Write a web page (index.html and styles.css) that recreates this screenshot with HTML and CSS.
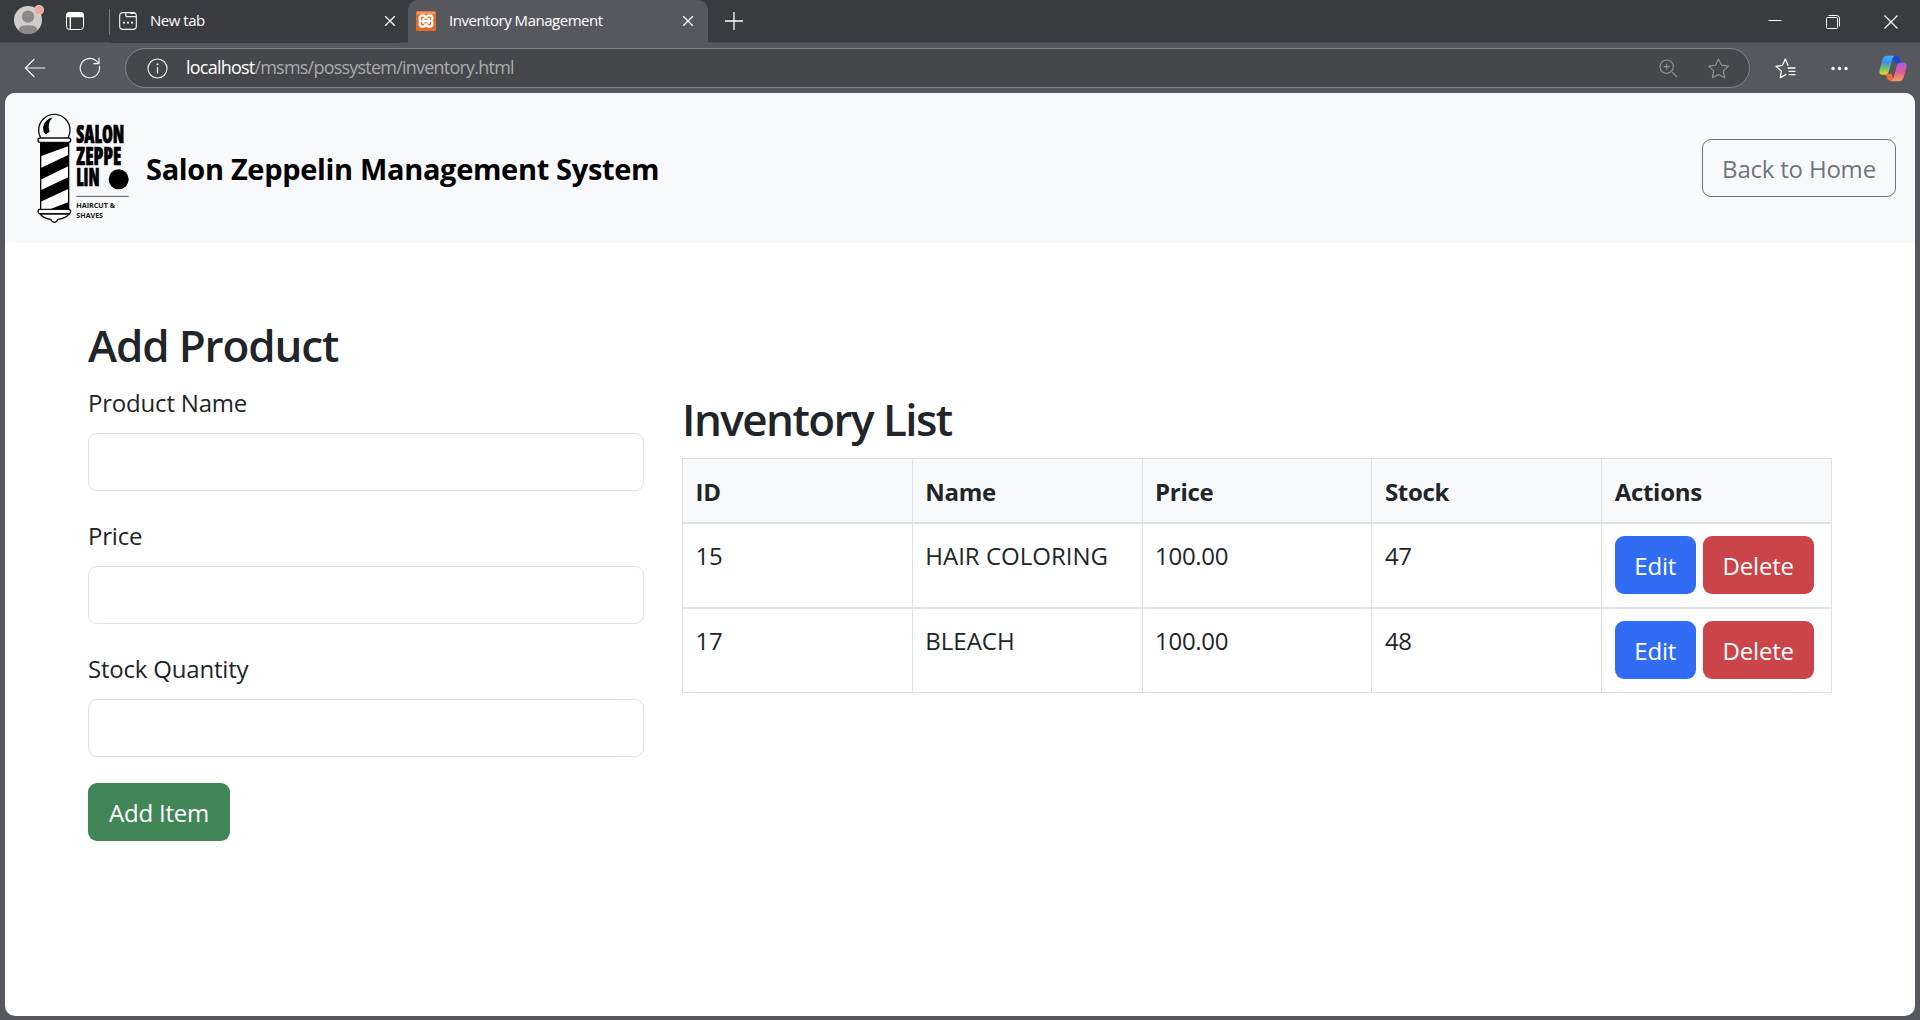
FILE: index.html
```html
<!DOCTYPE html>
<html lang="en">
<head>
<meta charset="utf-8">
<title>Inventory Management</title>
<link rel="stylesheet" href="styles.css">
</head>
<body>
<div class="browser">
  <div class="tabstrip">
    <div class="strip-tools">
      <svg class="avatar" width="32" height="32" viewBox="0 0 96 96">
        <defs><clipPath id="face"><circle cx="45" cy="48" r="42"/></clipPath></defs>
        <circle cx="45" cy="48" r="42" fill="#d0cecb"/>
        <g clip-path="url(#face)" fill="#8b8886"><circle cx="45" cy="38" r="18.500"/><path d="M16 100V80q0-16 29-16t29 16v20z"/></g>
        <circle cx="78" cy="18" r="15" fill="#d9d5d3"/><circle cx="78" cy="18" r="12" fill="#efa49c"/>
      </svg>
      <svg class="workspaces" width="18" height="18" viewBox="0 0 54 54"><rect x="1.500" y="1.500" width="51" height="51" rx="9" fill="none" stroke="#fff" stroke-width="3"/><path d="M1 16V9Q1 1 9 1h36q8 0 8 8v7zM11 14h4v38h-4z" fill="#fff"/></svg>
    </div>
    <div class="tab tab-idle">
      <svg width="18" height="18" viewBox="0 0 54 54" fill="none" stroke="#f0f0f0" stroke-width="3.500"><rect x="2" y="2" width="50" height="50" rx="10"/><path d="M20 2v6q0 6 6 6h26M34 4h14"/><path d="M12 32h6M24 32h6M36 32h6" stroke-width="5"/></svg>
      <span class="tab-label">New tab</span>
      <svg class="tab-close" width="12" height="12" viewBox="0 0 12 12"><path d="M1.200 1.200l9.600 9.600M10.800 1.200l-9.600 9.600" stroke="#fff" stroke-width="1.300"/></svg>
    </div>
    <div class="tab tab-active">
      <svg width="20" height="20" viewBox="0 0 60 60"><rect width="60" height="60" rx="5" fill="#df6c2b"/><path d="M2 2h56v8H2z" fill="#f09a61"/><path d="M12 17Q14 13 20 13Q27 13 28 20H32Q33 13 40 13Q48 13 49 20Q50 27 46 30Q50 33 49 40Q48 47 40 47Q33 47 32 40H28Q27 47 20 47Q12 47 11 40Q10 33 14 30Q10 27 11 20z" fill="none" stroke="#fff" stroke-width="7" stroke-linejoin="round"/><path d="M24 30h12M22 24v12M38 24v12" stroke="#fff" stroke-width="7" stroke-linecap="round"/></svg>
      <span class="tab-label">Inventory Management</span>
      <svg class="tab-close" width="12" height="12" viewBox="0 0 12 12"><path d="M1.200 1.200l9.600 9.600M10.800 1.200l-9.600 9.600" stroke="#fff" stroke-width="1.300"/></svg>
    </div>
    <svg class="new-tab" width="18" height="18" viewBox="0 0 18 18"><path d="M9 0v18M0 9h18" stroke="#fff" stroke-width="1.300"/></svg>
    <div class="window-controls">
      <svg width="14" height="14" viewBox="0 0 14 14"><path d="M.5 5.500h13" stroke="#fff"/></svg>
      <svg width="14" height="14" viewBox="0 0 14 14" fill="none" stroke="#fff"><rect x=".5" y="2.500" width="11" height="11" rx="1"/><path d="M2.500.5h8q3 0 3 3v8"/></svg>
      <svg width="14" height="14" viewBox="0 0 14 14"><path d="M.5.5l13 13M13.500.5l-13 13" stroke="#fff" stroke-width="1.200"/></svg>
    </div>
  </div>

  <div class="toolbar">
    <svg class="back" width="22" height="20" viewBox="0 0 66 60" fill="none" stroke="#f4f4f4" stroke-width="3.500"><path d="M64 30H5M31 3L4 30l27 27"/></svg>
    <svg class="reload" width="22" height="22" viewBox="0 0 66 66" fill="none" stroke="#f4f4f4" stroke-width="3.500"><path d="M61 27A29 29 0 1 1 50 10L60 20M60 2v18H43"/></svg>
    <div class="address">
      <svg width="21" height="21" viewBox="0 0 63 63"><circle cx="31.500" cy="31.500" r="28.500" fill="none" stroke="#ececec" stroke-width="3.500"/><path d="M31.500 27v19" stroke="#ececec" stroke-width="4"/><circle cx="31.500" cy="19" r="3" fill="#ececec"/></svg>
      <span class="url"><span class="host">localhost</span><span class="path">/msms/possystem/inventory.html</span></span>
      <svg class="magnify" width="19" height="19" viewBox="0 0 57 57" fill="none" stroke="#919295" stroke-width="3.500"><circle cx="23" cy="23" r="20"/><path d="M37 37l17 17M23 14v18M14 23h18"/></svg>
      <svg class="star" width="21" height="21" viewBox="0 0 63 63" fill="none" stroke="#919295" stroke-width="3.500" stroke-linejoin="round"><path d="M31.500 3l9 18.500 20.500 3-15 14 4 21-18.500-10-18.500 10 4-21-15-14 20.500-3z"/></svg>
    </div>
    <svg class="favorites" width="21" height="21" viewBox="0 0 63 63" fill="none" stroke="#fff" stroke-width="3.800" stroke-linejoin="round" stroke-linecap="round"><path d="M32 50L16 59l3-20L3 25l19-3 9-19 8 19M39 30h21M42 40h18M42 50h18"/></svg>
    <svg class="dots" width="17" height="5" viewBox="0 0 51 15" fill="#fff"><circle cx="6" cy="7.500" r="5"/><circle cx="25.500" cy="7.500" r="5"/><circle cx="45" cy="7.500" r="5"/></svg>
    <svg class="copilot" width="28" height="27" viewBox="0 0 84 81">
      <defs>
        <linearGradient id="cl" x1="0" y1="0" x2="0" y2="1"><stop offset="0" stop-color="#3fb4f4"/><stop offset=".35" stop-color="#3f8ff0"/><stop offset=".65" stop-color="#6cc16c"/><stop offset="1" stop-color="#f3cf2c"/></linearGradient>
        <linearGradient id="cr" x1="0" y1="0" x2="0" y2="1"><stop offset="0" stop-color="#a35af0"/><stop offset=".5" stop-color="#e9588f"/><stop offset="1" stop-color="#f6a75e"/></linearGradient>
      </defs>
      <path d="M42 2h10q8 0 10 9l4 14H48L38 10z" fill="#2247cf"/>
      <path d="M18 56h20l8 22H36q-9 0-12-9z" fill="#ec6a3a"/>
      <path d="M24 2h24q-6 2-8 11L30 48q-3 11-12 11H11Q-2 59 2 44l9-32Q14 2 24 2z" fill="url(#cl)"/>
      <path d="M60 79H36q6-2 8-10l9-36q3-10 13-10h8q11 0 8 15l-8 29q-4 12-14 12z" fill="url(#cr)"/>
    </svg>
  </div>

  <main class="page">
    <header class="navbar">
      <svg class="logo" width="130" height="135" viewBox="0 0 390 405">
        <circle cx="103" cy="90" r="47" fill="#f8f9fb" stroke="#111" stroke-width="4"/>
        <path d="M98 52Q73 59 69 83q0 13 8 20l12-8Q80 72 98 52z" fill="#000"/>
        <rect x="62" y="126" width="84" height="202" fill="#fff"/>
        <path d="M62 126h84v12L62 169zM62 204l84-40v34l-84 41zM62 271l84-40v35L62 305zM90 328l56-22v22zM62 328v-1h40" fill="#000"/>
        <path d="M62 126v202M146 126v202" stroke="#000" stroke-width="4"/>
        <rect x="54" y="114" width="98" height="13" rx="6" fill="#fff" stroke="#111" stroke-width="4"/>
        <path d="M58 328h90q8 7 0 13H58q-8-6 0-13z" fill="#fff" stroke="#111" stroke-width="4"/>
        <path d="M60 342h88q-13 14-34 16-4 9-11 9t-11-9q-20-2-32-16z" fill="#fff" stroke="#111" stroke-width="4"/>
        <g class="logo-name">
          <text x="169" y="129" textLength="144" lengthAdjust="spacingAndGlyphs">SALON</text>
          <text x="169" y="194" textLength="135" lengthAdjust="spacingAndGlyphs">ZEPPE</text>
          <text x="169" y="259" textLength="70" lengthAdjust="spacingAndGlyphs">LIN</text>
        </g>
        <circle cx="296" cy="238" r="30" fill="#000"/>
        <path d="M169 289h157" stroke="#555" stroke-width="3"/>
        <g class="logo-tag">
          <text x="169" y="325" textLength="116" lengthAdjust="spacingAndGlyphs">HAIRCUT &amp;</text>
          <text x="169" y="354" textLength="80" lengthAdjust="spacingAndGlyphs">SHAVES</text>
        </g>
      </svg>
      <span class="brand">Salon Zeppelin Management System</span>
      <a class="btn btn-outline">Back to Home</a>
    </header>

    <div class="content">
      <form class="product-form">
        <h2>Add Product</h2>
        <div class="field"><label for="name">Product Name</label><input id="name" type="text"></div>
        <div class="field"><label for="price">Price</label><input id="price" type="text"></div>
        <div class="field"><label for="stock">Stock Quantity</label><input id="stock" type="text"></div>
        <button class="btn btn-success" type="button">Add Item</button>
      </form>
      <section class="inventory">
        <h2 class="list-title">Inventory List</h2>
        <table>
          <thead><tr><th>ID</th><th>Name</th><th>Price</th><th>Stock</th><th>Actions</th></tr></thead>
          <tbody>
            <tr><td>15</td><td>HAIR COLORING</td><td>100.00</td><td>47</td><td><div class="actions"><button class="btn btn-primary" type="button">Edit</button><button class="btn btn-danger" type="button">Delete</button></div></td></tr>
            <tr><td>17</td><td>BLEACH</td><td>100.00</td><td>48</td><td><div class="actions"><button class="btn btn-primary" type="button">Edit</button><button class="btn btn-danger" type="button">Delete</button></div></td></tr>
          </tbody>
        </table>
      </section>
    </div>
  </main>
</div>
</body>
</html>
```
FILE: styles.css
```css
* { box-sizing: border-box; }
body { margin: 0; font-family: "Open Sans", "Noto Sans", sans-serif; color: #212529; }
svg { display: block; flex: none; }
.browser { width: 1920px; height: 1020px; display: flex; flex-direction: column; background: #57585d; overflow: hidden; }

.tabstrip { height: 43px; flex: none; display: flex; background: #3a3b3e; border-bottom: 1px solid #4c4d51; }
.strip-tools { width: 110px; display: flex; align-items: flex-start; border-right: 1px solid #77787b; height: 26px; margin-top: 9px; }
.avatar { margin: -5px 0 0 13px; }
.avatar + svg { margin: 3px 0 0 21px; }
.tab { display: flex; align-items: center; color: #fff; font-size: 15px; letter-spacing: -.48px; height: 43px; padding-bottom: 1px; }
.tab-label { flex: 1; position: relative; top: -1px; white-space: nowrap; }
.tab-idle { width: 298px; padding-left: 9px; padding-right: 12px; gap: 13px; border-radius: 0 0 10px 0; background: #3a3b3e; }
.tab-active { width: 300px; padding: 0 14px 1px 8px; gap: 13px; background: #57585d; border-radius: 10px 10px 0 0; }
.new-tab { margin: 12px 0 0 17px; }
.window-controls { margin-left: auto; display: flex; gap: 44px; padding: 15px 22px 0 0; }

.toolbar { height: 50px; flex: none; display: flex; align-items: center; }
.back { margin: 0 0 0 24px; }
.reload { margin: 0 0 0 33px; }
.address { width: 1625px; height: 40px; margin-left: 24px; border: 1px solid #85868a; border-radius: 20px; background: #46474a; display: flex; align-items: center; padding: 0 20px 0 21px; }
.url { margin-left: 18px; flex: 1; font-size: 18px; line-height: 24px; letter-spacing: -.78px; position: relative; top: -1px; }
.host { color: #fff; }
.path { color: #a9aaac; }
.magnify { margin-right: 30px; }
.favorites { margin-left: 25px; }
.dots { margin-left: 35px; }
.copilot { margin-left: 31px; }

.page { flex: none; width: 1910px; height: 923px; margin-left: 5px; background: #fff; border-radius: 10px; overflow: hidden; }
.navbar { height: 150px; display: flex; align-items: center; background: #f8f9fb; padding: 0 19px 0 15px; }
.logo { align-self: flex-start; margin-top: 7px; }
.logo-name { font-family: "Open Sans", sans-serif; font-size: 74px; font-weight: 800; font-stretch: 75%; fill: #000; stroke: #000; stroke-width: 2px; }
.logo-tag { font-size: 22px; font-weight: 700; fill: #111; }
.brand { margin-left: -4px; flex: 1; color: #000; font-size: 29px; font-weight: 700; letter-spacing: -.33px; white-space: nowrap; }

.btn { display: inline-flex; align-items: center; justify-content: center; height: 58px; padding: 1px 0 0; border: 0; border-radius: 9px; font: 400 24px/36px "Open Sans", sans-serif; letter-spacing: -.2px; color: #fff; white-space: nowrap; }
.btn-outline { width: 194px; border: 1px solid #6c757d; color: #6c757d; }
.btn-success { width: 142px; background: #428557; margin-top: -1.5px; }
.btn-primary { width: 81px; background: #316cf4; }
.btn-danger { width: 111px; background: #ca444a; }

.content { display: flex; align-items: flex-start; padding: 77px 83px 0; gap: 38px; }
.product-form { width: 556px; flex: none; }
h2 { margin: 0 0 12px; font-size: 44px; line-height: 53px; font-weight: 600; letter-spacing: -1.15px; }
.product-form h2 { position: relative; top: -1px; }
.list-title { letter-spacing: -1.55px; }
.field { height: 133.2px; font-size: 24px; letter-spacing: -.2px; }
label { display: block; line-height: 36px; margin-bottom: 12px; }
input { display: block; width: 100%; height: 58px; border: 1px solid #dee2e6; border-radius: 9px; background: #fff; }

.inventory { width: 1150px; padding-top: 73px; }
table { width: 1150px; table-layout: fixed; border-collapse: collapse; font-size: 24px; line-height: 36px; letter-spacing: -.3px; }
th, td { border: 1px solid #dee2e6; padding: 12px 12.5px 0; text-align: left; vertical-align: top; }
thead tr { height: 64px; }
th { background: #f8f9fb; padding-top: 15px; font-weight: 700; }
tbody tr { height: 85px; }
tbody td { border-top-width: 2px; padding-top: 14px; }
tbody td:nth-child(2) { letter-spacing: 0; }
.actions { display: flex; gap: 7px; margin-top: -2px; }
.actions .btn { padding-top: 3px; }
```
